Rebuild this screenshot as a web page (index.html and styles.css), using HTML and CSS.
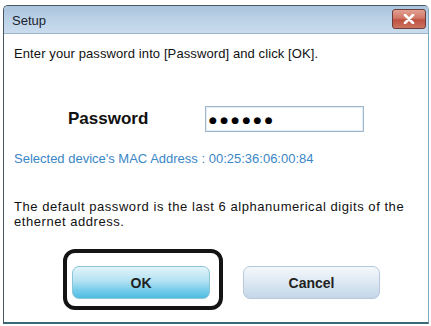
FILE: index.html
```html
<!DOCTYPE html>
<html>
<head>
<meta charset="utf-8">
<link rel="stylesheet" href="styles.css">
</head>
<body>
<div class="window">
  <div class="titlebar">
    <span class="title">Setup</span>
    <span class="close"><svg width="12" height="10" viewBox="0 0 12 10"><path d="M2 1 L10 9 M10 1 L2 9" stroke="#fff" stroke-width="2.6" stroke-linecap="round"/></svg></span>
  </div>
  <div class="content">
    <p class="intro">Enter your password into [Password] and click [OK].</p>
    <div class="pwrow">
      <span class="pwlabel">Password</span>
      <div class="pwinput"><span class="dots">●●●●●●</span></div>
    </div>
    <p class="mac">Selected device's MAC Address : 00:25:36:06:00:84</p>
    <p class="note">The default password is the last 6 alphanumerical digits of the ethernet address.</p>
    <div class="buttons">
      <div class="highlight"><div class="btn ok">OK</div></div>
      <div class="btn cancel">Cancel</div>
    </div>
  </div>
</div>
</body>
</html>
```
FILE: styles.css
```css
html, body {
  margin: 0;
  padding: 0;
  background: #ffffff;
}
body {
  width: 431px;
  height: 326px;
  overflow: hidden;
  font-family: "Liberation Sans", Arial, sans-serif;
}
.window {
  margin: 5px 0 0 3px;
  width: 424px;
  height: 316px;
  border: 1px solid #4a5560;
  border-bottom: 2px solid #3a6a78;
  border-right: 1px solid #7fa6c0;
  border-radius: 5px 5px 0 0;
  background: #fff;
  display: flex;
  flex-direction: column;
}
.titlebar {
  height: 27px;
  flex: none;
  display: flex;
  align-items: center;
  justify-content: space-between;
  padding: 0 2px 0 8px;
  background: linear-gradient(to bottom, #a9c4dd 0%, #bcd2e7 50%, #cadcee 100%);
  border-radius: 4px 4px 0 0;
  border-bottom: 1px solid #9db5cb;
}
.title {
  font-size: 13px;
  color: #1a2330;
  padding-top: 1px;
}
.close {
  width: 32px;
  height: 18px;
  margin-top: -2px;
  border: 1px solid #6b3d3a;
  border-radius: 3px;
  background: linear-gradient(to bottom, #e3a090 0%, #d07868 45%, #be5040 55%, #cc7460 100%);
  display: flex;
  align-items: center;
  justify-content: center;
}
.content {
  flex: 1;
  padding: 0 0 0 10px;
  display: flex;
  flex-direction: column;
}
.intro {
  margin: 12px 0 0 0;
  font-size: 13px;
  letter-spacing: 0.1px;
  color: #111;
}
.pwrow {
  display: flex;
  align-items: center;
  margin-top: 45px;
}
.pwlabel {
  font-size: 17px;
  font-weight: bold;
  color: #111;
  margin-left: 54px;
  width: 137px;
}
.pwinput {
  width: 159px;
  height: 26px;
  border: 1px solid #9fb6cc;
  box-shadow: inset 0 0 0 1px #e3ecf4;
  display: flex;
  align-items: center;
  padding: 2px 0 0 3px;
  box-sizing: border-box;
}
.dots {
  font-family: "DejaVu Sans", sans-serif;
  font-size: 9px;
  letter-spacing: 3.3px;
  color: #000;
}
.mac {
  margin: 19px 0 0 0;
  font-size: 13px;
  color: #3b86c6;
}
.note {
  margin: 33px 0 0 0;
  font-size: 13px;
  letter-spacing: 0.55px;
  line-height: 15px;
  color: #111;
  width: 410px;
}
.buttons {
  display: flex;
  align-items: flex-start;
  margin-top: 20px;
}
.highlight {
  margin-left: 49px;
  width: 160px;
  height: 61px;
  box-sizing: border-box;
  border: 4px solid #141414;
  border-radius: 12px;
  padding: 13px 0 0 5px;
}
.btn {
  height: 33px;
  box-sizing: border-box;
  border-radius: 7px;
  display: flex;
  align-items: center;
  justify-content: center;
  font-size: 14px;
  font-weight: bold;
  color: #222;
}
.ok {
  width: 138px;
  border: 1px solid #8cc4d8;
  background: linear-gradient(to bottom, #e2f4fa 0%, #b4e2f2 45%, #7fd0ec 70%, #4fbde2 100%);
}
.cancel {
  width: 137px;
  margin-left: 20px;
  margin-top: 17px;
  border: 1px solid #b6c8da;
  background: linear-gradient(to bottom, #f4f8fb 0%, #dde8f2 50%, #c3d6e8 100%);
}
```
